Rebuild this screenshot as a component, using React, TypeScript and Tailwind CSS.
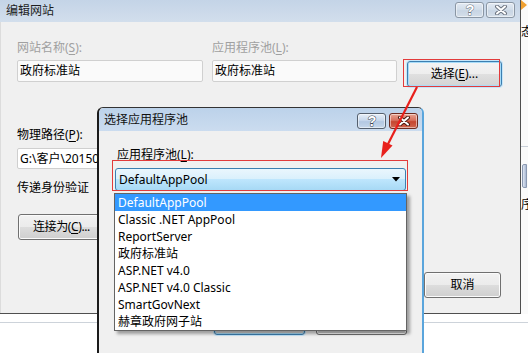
import React from "react";

const FONT = { fontFamily: '"Noto Sans", "Noto Sans CJK SC", sans-serif' };

const btn =
  "flex items-center justify-center rounded-[3px] border border-[#707070] bg-[linear-gradient(to_bottom,#f2f2f2_0%,#ebebeb_50%,#dddddd_50%,#cfcfcf_100%)] shadow-[inset_0_0_0_1px_#fbfbfb] text-[12px] leading-[16px] text-black";

const btnFocus =
  "flex items-center justify-center rounded-[3px] border border-[#3c7fb1] bg-[linear-gradient(to_bottom,#f4f4f4_0%,#eeeeee_50%,#e0e0e0_50%,#d4d4d4_100%)] shadow-[inset_0_0_0_1px_#a8dcf8,0_0_0_1px_#c6e6fa] text-[12px] leading-[16px] text-black";

function U({ c }: { c: string }) {
  return <span className="underline underline-offset-2">{c}</span>;
}

function CapBtn({ kind, active, red }: { kind: "help" | "close"; active?: boolean; red?: boolean }) {
  const bg = red
    ? "bg-[linear-gradient(to_bottom,#e8a493_0%,#d7705d_45%,#c5452f_55%,#d0664f_100%)] border-[#6d2a1f]"
    : active
    ? "bg-[linear-gradient(to_bottom,#e6eef8_0%,#c8d8ec_45%,#b3c8e2_55%,#c6d7ea_100%)] border-[#55606e]"
    : "bg-[linear-gradient(to_bottom,#e2e9f2_0%,#d3deea_45%,#c8d5e4_55%,#d4dee9_100%)] border-[#8a96a4]";
  const outline = red ? "#4a1a12" : active ? "#3d4652" : "#6c7480";
  const fill = "#ffffff";
  return (
    <div className={`w-[29px] h-[16px] rounded-[3px] border ${bg} flex items-center justify-center shadow-[inset_0_0_0_1px_rgba(255,255,255,0.5)]`}>
      {kind === "close" ? (
        <svg width="14" height="10" viewBox="0 0 14 10">
          <path d="M3 1.5 L11 8.5 M11 1.5 L3 8.5" stroke={outline} strokeWidth="4" strokeLinecap="round" />
          <path d="M3 1.5 L11 8.5 M11 1.5 L3 8.5" stroke={fill} strokeWidth="2" strokeLinecap="round" />
        </svg>
      ) : (
        <svg width="12" height="14" viewBox="0 0 12 14">
          <text
            x="6"
            y="12"
            textAnchor="middle"
            fontSize="14"
            fontWeight="bold"
            fontFamily="Liberation Sans, sans-serif"
            fill={fill}
            stroke={outline}
            strokeWidth="1"
            paintOrder="stroke"
          >
            ?
          </text>
        </svg>
      )}
    </div>
  );
}

const items = [
  "DefaultAppPool",
  "Classic .NET AppPool",
  "ReportServer",
  "政府标准站",
  "ASP.NET v4.0",
  "ASP.NET v4.0 Classic",
  "SmartGovNext",
  "赫章政府网子站",
];

export default function App() {
  return (
    <div className="relative w-[528px] h-[353px] overflow-hidden bg-white flex flex-col text-[12px] leading-[16px] text-black" style={FONT}>
      {/* top row: outer window + right strip */}
      <div className="flex h-[314px]">
        <div className="w-[521px] h-[314px] flex flex-col border-r border-b border-[#4f4f4f] bg-[#f0f0f0]">
          {/* title bar */}
          <div className="h-[22px] flex items-center bg-[linear-gradient(to_bottom,#c4d4e7,#d2deec)] pl-[6px] pr-[5px]">
            <span className="text-[#1e1e1e]">编辑网站</span>
            <div className="ml-auto flex gap-[2px] mt-[-2px]">
              <CapBtn kind="help" />
              <CapBtn kind="close" />
            </div>
          </div>
          {/* content */}
          <div className="flex-1 pl-[16px] pt-[18px] border-l border-[#dcdcdc]">
            <div className="flex">
              <div className="w-[186px]">
                <div className="h-[16px] text-[#a0a0a0]">
                  网站名称(<U c="S" />):
                </div>
                <div className="mt-[4px] h-[22px] rounded-[2px] border border-[#d0d0d0] bg-[#fafafa] pl-[2px] flex items-center">
                  政府标准站
                </div>
              </div>
              <div className="w-[185px] ml-[9px]">
                <div className="h-[16px] text-[#a0a0a0]">
                  应用程序池(<U c="L" />):
                </div>
                <div className="mt-[4px] h-[22px] rounded-[2px] border border-[#d0d0d0] bg-[#fafafa] pl-[2px] flex items-center">
                  政府标准站
                </div>
              </div>
              <div className={`${btnFocus} ml-[10px] mt-[21px] w-[95px] h-[26px]`}>
                选择(<U c="E" />)...
              </div>
            </div>
            <div className="mt-[40px] h-[16px]">
              物理路径(<U c="P" />):
            </div>
            <div className="mt-[5px] h-[21px] w-[380px] rounded-[2px] border border-[#cfcfcf] bg-white pl-[2px] flex items-center">
              G:\客户\20150
            </div>
            <div className="mt-[11px] h-[16px]">传递身份验证</div>
            <div className={`${btn} mt-[18px] w-[98px] h-[26px] ml-[1px] !justify-start pl-[14px] tracking-[-0.4px]`}>
              连接为(<U c="C" />)...
            </div>
            <div className="mt-[32px] flex justify-end pr-[19px] gap-[10px]">
              <div className={`${btn} w-[77px] h-[26px]`}>确定</div>
              <div className={`${btn} w-[77px] h-[26px]`}>取消</div>
            </div>
          </div>
        </div>
        {/* right strip: other window */}
        <div className="flex-1 bg-[#fafafa] flex flex-col overflow-hidden">
          <div className="h-[12px] flex items-start">
            <svg width="7" height="11" viewBox="0 0 7 11">
              <path d="M0 0 L6 5 L0 10 Z" fill="#f0a030" />
            </svg>
          </div>
          <div className="mt-[13px] h-[14px] leading-[14px] whitespace-nowrap">态</div>
          <div className="mt-[107px] h-px bg-[#c8cfd8]" />
          <div className="mt-[17px] ml-[1px] w-[5px] h-[24px] rounded-l-[2px] border border-[#8a98b0] bg-[linear-gradient(to_right,#dfe6f2,#a9b8d2)]" />
          <div className="mt-[10px] h-[14px] leading-[14px] whitespace-nowrap">序</div>
        </div>
      </div>
      {/* bottom area */}
      <div className="flex-1 bg-white">
        <div className="mt-[8px] h-px bg-[#cdd3da]" />
      </div>

      {/* dialog window */}
      <div className="absolute left-[97px] top-[107px] w-[327px] h-[260px] flex flex-col rounded-t-[6px] border-t border-l-2 border-r-2 border-t-[#333] border-l-[#1b1b1b] border-r-[#5aa5dc] bg-[#f0f0f0]">
        <div className="h-[23px] flex items-center rounded-t-[5px] bg-[linear-gradient(to_bottom,#bcd2ea,#cbdcef)] pl-[5px] pr-[2px]">
          <span className="text-[#111]">选择应用程序池</span>
          <div className="ml-auto flex gap-[3px] mt-[2px]">
            <CapBtn kind="help" active />
            <div className="w-[31px]">
              <CapBtn kind="close" red />
            </div>
          </div>
        </div>
        <div className="flex-1 pl-[16px] pt-[16px]">
          <div className="h-[16px] ml-[2px]">
            应用程序池(<U c="L" />):
          </div>
          <div className="mt-[5px] w-[291px] h-[23px] rounded-[3px] border border-[#3c7fb1] bg-[linear-gradient(to_bottom,#eaf6fd_0%,#d9f0fc_50%,#bee6fd_50%,#a7d9f5_100%)] flex items-center pl-[3px] pr-[5px]">
            <span>DefaultAppPool</span>
            <svg className="ml-auto" width="8" height="5" viewBox="0 0 8 5">
              <path d="M0 0 L8 0 L4 4.5 Z" fill="#000" />
            </svg>
          </div>
          <div className="mt-[118px] flex justify-end pr-[15px] gap-[11px]">
            <div className={`${btnFocus} w-[91px] h-[26px]`}>确定</div>
            <div className={`${btn} w-[91px] h-[26px]`}>取消</div>
          </div>
        </div>

        {/* dropdown list */}
        <div className="absolute left-[15px] top-[85px] w-[293px] border border-[#646464] bg-white shadow-[3px_3px_3px_rgba(0,0,0,0.35)]">
          {items.map((it, i) => (
            <div
              key={it}
              className={`h-[17px] leading-[17px] pl-[3px] ${i === 0 ? "bg-[#3399ff] text-white" : "text-black"}`}
            >
              {it}
            </div>
          ))}
        </div>
      </div>

      {/* annotations */}
      <div className="absolute left-[403px] top-[59px] w-[97px] h-[28px] border border-[#e23b3b] pointer-events-none" />
      <div className="absolute left-[112px] top-[160px] w-[296px] h-[31px] border border-[#e23b3b] pointer-events-none" />
      <svg className="absolute left-0 top-0 pointer-events-none" width="528" height="353" viewBox="0 0 528 353">
        <line x1="417" y1="87" x2="386" y2="148" stroke="#e8201c" strokeWidth="2.2" />
        <path d="M381 158 L392.5 145.5 L383.2 141 Z" fill="#e8201c" />
      </svg>
    </div>
  );
}
